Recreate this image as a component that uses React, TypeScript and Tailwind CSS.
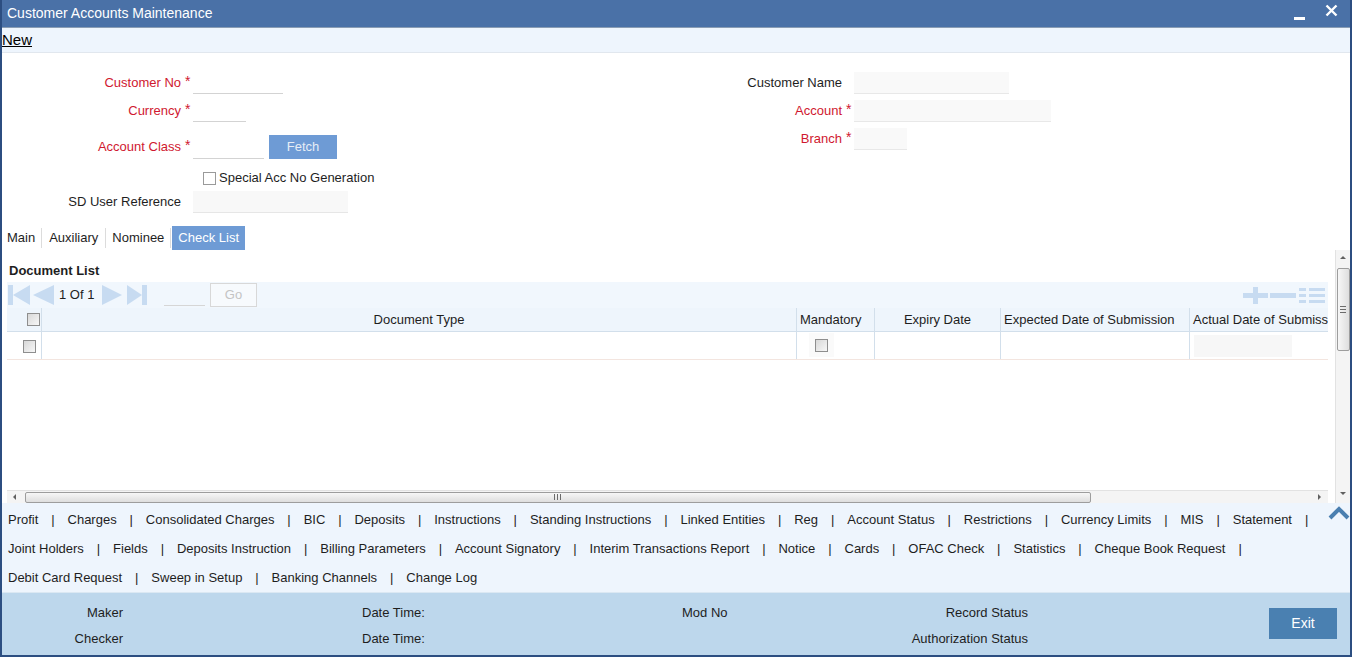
import React from 'react';

const linkRows: { items: string[]; trailing: boolean }[] = [
  {
    items: [
      'Profit',
      'Charges',
      'Consolidated Charges',
      'BIC',
      'Deposits',
      'Instructions',
      'Standing Instructions',
      'Linked Entities',
      'Reg',
      'Account Status',
      'Restrictions',
      'Currency Limits',
      'MIS',
      'Statement',
    ],
    trailing: true,
  },
  {
    items: [
      'Joint Holders',
      'Fields',
      'Deposits Instruction',
      'Billing Parameters',
      'Account Signatory',
      'Interim Transactions Report',
      'Notice',
      'Cards',
      'OFAC Check',
      'Statistics',
      'Cheque Book Request',
    ],
    trailing: true,
  },
  {
    items: ['Debit Card Request', 'Sweep in Setup', 'Banking Channels', 'Change Log'],
    trailing: false,
  },
];

function Checkbox() {
  return (
    <span className="inline-block w-[13px] h-[13px] border border-[#8e8e8e] bg-linear-to-br from-[#d8d8d8] to-[#f7f7f7]" />
  );
}

function FieldLabel({ text, required, width }: { text: string; required?: boolean; width: string }) {
  return (
    <div className="flex items-center">
      <div className={`${width} text-right ${required ? 'text-[#d0182f]' : 'text-[#1e1e1e]'}`}>{text}</div>
      <div className="w-[12px] pl-[4px] text-[#d0182f] self-start leading-[16px] text-[14px]">{required ? '*' : ''}</div>
    </div>
  );
}

export default function App() {
  return (
    <div className="w-[1352px] h-[657px] flex flex-col overflow-hidden border-x-2 border-b-2 border-[#2c4e81] bg-white text-[13px] font-['Liberation_Sans',Arial,sans-serif]">
      {/* Title bar */}
      <div className="h-[28px] shrink-0 flex items-center justify-between bg-[#4a71a7] border-b border-[#8a9db4] pl-[5px] pr-[12px]">
        <span className="text-white text-[14px]">Customer Accounts Maintenance</span>
        <div className="flex items-center gap-[20px]">
          <svg width="11" height="14" viewBox="0 0 11 14">
            <rect x="0" y="10" width="11" height="3" fill="white" />
          </svg>
          <svg width="13" height="13" viewBox="0 0 13 13" className="-mt-[6px]">
            <path d="M1.5 1.5 L11.5 11.5 M11.5 1.5 L1.5 11.5" stroke="white" strokeWidth="2.4" />
          </svg>
        </div>
      </div>

      {/* Toolbar */}
      <div className="h-[25px] shrink-0 flex items-center bg-[#eef5fd] border-b border-[#e1e7ee]">
        <span className="text-[15px] underline text-black">New</span>
      </div>

      {/* Form */}
      <div className="h-[173px] shrink-0 flex pt-[19px]">
        <div className="w-[600px] flex flex-col">
          <div className="h-[22px] flex items-center">
            <FieldLabel text="Customer No" required width="w-[179px]" />
            <div className="w-[90px] h-[22px] border-b border-[#d3d3d3]" />
          </div>
          <div className="h-[22px] mt-[6px] flex items-center">
            <FieldLabel text="Currency" required width="w-[179px]" />
            <div className="w-[53px] h-[22px] border-b border-[#d3d3d3]" />
          </div>
          <div className="h-[24px] mt-[13px] flex items-center">
            <FieldLabel text="Account Class" required width="w-[179px]" />
            <div className="w-[71px] h-[23px] border-b border-[#d3d3d3]" />
            <button className="ml-[5px] w-[68px] h-[24px] bg-[#6e9bd5] text-[#e6edf6] text-[13px]">Fetch</button>
          </div>
          <div className="h-[22px] mt-[8px] flex items-center pl-[201px] gap-[3px] text-[#1e1e1e] text-[13px]">
            <span className="inline-block w-[13px] h-[13px] border border-[#9a9a9a] bg-white" />
            <span>Special Acc No Generation</span>
          </div>
          <div className="h-[22px] mt-[2px] flex items-center">
            <FieldLabel text="SD User Reference" width="w-[179px]" />
            <div className="w-[155px] h-[22px] bg-[#f8f8f8] border-b border-[#e6e6e6]" />
          </div>
        </div>
        <div className="flex flex-col">
          <div className="h-[22px] flex items-center">
            <FieldLabel text="Customer Name" width="w-[240px]" />
            <div className="w-[155px] h-[22px] bg-[#f9f9f9] border-b border-[#e8e8e8]" />
          </div>
          <div className="h-[22px] mt-[6px] flex items-center">
            <FieldLabel text="Account" required width="w-[240px]" />
            <div className="w-[197px] h-[22px] bg-[#f9f9f9] border-b border-[#e8e8e8]" />
          </div>
          <div className="h-[22px] mt-[6px] flex items-center">
            <FieldLabel text="Branch" required width="w-[240px]" />
            <div className="w-[53px] h-[22px] bg-[#f9f9f9] border-b border-[#e8e8e8]" />
          </div>
        </div>
      </div>

      {/* Tabs */}
      <div className="h-[24px] shrink-0 flex items-stretch text-[13px] text-[#1e1e1e]">
        <div className="flex items-center pl-[5px] pr-[6px] my-[2px] border-r border-[#dcdcdc]">Main</div>
        <div className="flex items-center px-[7px] my-[2px] border-r border-[#dcdcdc]">Auxiliary</div>
        <div className="flex items-center px-[6px] my-[2px] border-r border-[#dcdcdc]">Nominee</div>
        <div className="flex items-center ml-[1px] px-[6px] bg-[#6e9bd5] text-white text-[13px]">Check List</div>
      </div>

      {/* Content panel */}
      <div className="h-[253px] shrink-0 flex">
        <div className="flex-1 flex flex-col pl-[5px] pr-[7px] min-w-0">
          <div className="h-[32px] shrink-0 flex items-end pb-[2px] pl-[2px] font-bold text-[13px] text-[#1e1e1e]">
            Document List
          </div>
          {/* Pagination */}
          <div className="h-[26px] shrink-0 flex items-center bg-[#f1f7fd]">
            <svg width="22" height="20" viewBox="0 0 22 20" className="ml-[1px]">
              <rect x="0" y="0" width="5" height="20" fill="#c7dbf1" />
              <polygon points="22,0 22,20 5,10" fill="#c7dbf1" />
            </svg>
            <svg width="21" height="20" viewBox="0 0 21 20" className="ml-[3px]">
              <polygon points="21,0 21,20 0,10" fill="#c7dbf1" />
            </svg>
            <span className="ml-[5px] text-[13px] text-[#1e1e1e] w-[39px] whitespace-nowrap">1 Of 1</span>
            <svg width="20" height="20" viewBox="0 0 20 20" className="ml-[4px]">
              <polygon points="0,0 0,20 20,10" fill="#c7dbf1" />
            </svg>
            <svg width="20" height="20" viewBox="0 0 20 20" className="ml-[5px]">
              <polygon points="0,0 0,20 15,10" fill="#c7dbf1" />
              <rect x="15" y="0" width="5" height="20" fill="#c7dbf1" />
            </svg>
            <div className="ml-[17px] w-[41px] h-[22px] border-b border-[#d6d6d6]" />
            <button className="ml-[5px] w-[47px] h-[24px] border border-[#d8d8d8] bg-[#f7fafd] text-[#c4c4c4] text-[13px]">
              Go
            </button>
            <div className="ml-auto flex items-center gap-[2px] pr-[3px]">
              <svg width="25" height="17" viewBox="0 0 25 17">
                <rect x="0" y="6" width="25" height="5" fill="#c7dbf1" />
                <rect x="10" y="0" width="5" height="17" fill="#c7dbf1" />
              </svg>
              <svg width="26" height="17" viewBox="0 0 26 17">
                <rect x="0" y="6" width="26" height="5" fill="#c7dbf1" />
              </svg>
              <svg width="26" height="17" viewBox="0 0 26 17" className="ml-[1px]">
                <rect x="0" y="1" width="7" height="3" fill="#c7dbf1" />
                <rect x="0" y="7" width="7" height="3" fill="#c7dbf1" />
                <rect x="0" y="13" width="7" height="3" fill="#c7dbf1" />
                <rect x="10" y="1" width="16" height="3" fill="#c7dbf1" />
                <rect x="10" y="7" width="16" height="3" fill="#c7dbf1" />
                <rect x="10" y="13" width="16" height="3" fill="#c7dbf1" />
              </svg>
            </div>
          </div>
          {/* Table */}
          <div className="overflow-hidden shrink-0">
            <div className="w-[1400px] text-[13px] text-[#1e1e1e]">
              <div className="h-[24px] flex bg-[#eef5fc] border-b border-[#d2dfeb]">
                <div className="w-[35px] flex items-center justify-end pr-[1px] border-r border-[#d2dfeb]">
                  <Checkbox />
                </div>
                <div className="w-[755px] flex items-center justify-center border-r border-[#d2dfeb]">Document Type</div>
                <div className="w-[78px] flex items-center pl-[3px] border-r border-[#d2dfeb]">Mandatory</div>
                <div className="w-[126px] flex items-center justify-center border-r border-[#d2dfeb]">Expiry Date</div>
                <div className="w-[189px] flex items-center pl-[3px] border-r border-[#d2dfeb]">Expected Date of Submission</div>
                <div className="w-[200px] flex items-center pl-[3px] whitespace-nowrap">Actual Date of Submission</div>
              </div>
              <div className="h-[28px] flex border-b border-[#f3e5df]">
                <div className="w-[35px] flex items-center pl-[16px] pt-[2px] border-r border-[#d2dfeb]">
                  <Checkbox />
                </div>
                <div className="w-[755px] border-r border-[#d2dfeb]" />
                <div className="w-[78px] flex items-center pl-[12px] border-r border-[#d2dfeb]">
                  <div className="w-[25px] h-[24px] flex items-center justify-center bg-[#fafafa] -mt-[1px]">
                    <Checkbox />
                  </div>
                </div>
                <div className="w-[126px] border-r border-[#d2dfeb]" />
                <div className="w-[189px] border-r border-[#d2dfeb]" />
                <div className="w-[200px] flex items-center pl-[4px]">
                  <div className="w-[98px] h-[22px] bg-[#f7f7f7]" />
                </div>
              </div>
            </div>
          </div>
          <div className="flex-1" />
          {/* Horizontal scrollbar */}
          <div className="h-[13px] shrink-0 flex items-center bg-[#f4f4f4] border-t border-[#e2e2e2]">
            <svg width="16" height="12" viewBox="0 0 16 12">
              <polygon points="9,3 9,9 6,6" fill="#606060" />
            </svg>
            <div className="ml-[2px] w-[1066px] h-[11px] rounded-[2px] border border-[#9d9d9d] bg-linear-to-b from-[#f7f7f7] to-[#dedede] flex items-center justify-center">
              <svg width="8" height="6" viewBox="0 0 8 6">
                <rect x="0" y="0" width="1" height="6" fill="#6b6b6b" />
                <rect x="3" y="0" width="1" height="6" fill="#6b6b6b" />
                <rect x="6" y="0" width="1" height="6" fill="#6b6b6b" />
              </svg>
            </div>
            <div className="flex-1" />
            <svg width="16" height="12" viewBox="0 0 16 12">
              <polygon points="6,3 6,9 9,6" fill="#606060" />
            </svg>
          </div>
        </div>
        {/* Vertical scrollbar */}
        <div className="w-[15px] shrink-0 flex flex-col items-center bg-[#f4f4f4] border-l border-[#e2e2e2]">
          <svg width="14" height="16" viewBox="0 0 14 16">
            <polygon points="4,9 10,9 7,6" fill="#606060" />
          </svg>
          <div className="mt-[2px] w-[13px] h-[83px] rounded-[2px] border border-[#9d9d9d] bg-linear-to-r from-[#f7f7f7] to-[#dedede] flex items-center justify-center">
            <svg width="6" height="8" viewBox="0 0 6 8">
              <rect x="0" y="0" width="6" height="1" fill="#6b6b6b" />
              <rect x="0" y="3" width="6" height="1" fill="#6b6b6b" />
              <rect x="0" y="6" width="6" height="1" fill="#6b6b6b" />
            </svg>
          </div>
          <div className="flex-1" />
          <svg width="14" height="16" viewBox="0 0 14 16">
            <polygon points="4,5 10,5 7,8" fill="#606060" />
          </svg>
        </div>
      </div>

      {/* Links */}
      <div className="relative h-[89px] shrink-0 bg-[#eef5fd] pt-[2px] text-[13px] text-[#1e1e1e]">
        {linkRows.map((row, ri) => (
          <div key={ri} className="h-[29px] flex items-center pl-[6px] whitespace-nowrap">
            {row.items.map((item, i) => (
              <React.Fragment key={item}>
                {i > 0 && <span className="mx-[12.9px]">|</span>}
                <span>{item}</span>
              </React.Fragment>
            ))}
            {row.trailing && <span className="ml-[13px]">|</span>}
          </div>
        ))}
        <svg width="22" height="14" viewBox="0 0 22 14" className="absolute right-0 top-[3px]">
          <polyline points="2,12 11,3 20,12" fill="none" stroke="#4a7fb0" strokeWidth="4" />
        </svg>
      </div>

      {/* Footer */}
      <div className="h-[63px] shrink-0 bg-[#bdd7ec] border-t border-[#dbe8f3] flex text-[13px] text-[#1e1e1e]">
        <div className="flex-1 flex flex-col pt-[7px]">
          <div className="h-[26px] flex items-center">
            <div className="w-[121px] text-right">Maker</div>
            <div className="ml-[239px] w-[320px]">Date Time:</div>
            <div className="w-[200px]">Mod No</div>
            <div className="w-[146px] text-right">Record Status</div>
          </div>
          <div className="h-[26px] flex items-center">
            <div className="w-[121px] text-right">Checker</div>
            <div className="ml-[239px] w-[320px]">Date Time:</div>
            <div className="w-[200px]" />
            <div className="w-[146px] text-right">Authorization Status</div>
          </div>
        </div>
        <div className="pt-[15px] pr-[13px]">
          <button className="w-[68px] h-[31px] bg-[#4a80b1] text-white text-[14px]">Exit</button>
        </div>
      </div>
    </div>
  );
}
